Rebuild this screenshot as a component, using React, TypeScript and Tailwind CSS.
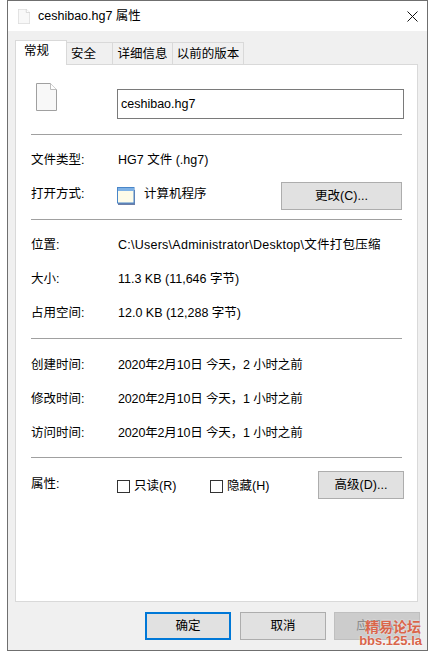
const font = "font-['Liberation_Sans','Noto_Sans_CJK_SC',sans-serif]"

function FileIcon({ small }: { small?: boolean }) {
  return (
    <svg width={small ? 12 : 21} height={small ? 15 : 28} viewBox="0 0 21 28" preserveAspectRatio="none" className="shrink-0">
      <path d="M0.5 0.5H14.5L20.5 6.5V27.5H0.5Z" fill="#f8f8f8" stroke={small ? '#c4c4c4' : '#a0a0a0'} />
      <path d="M14.5 0.5V6.5H20.5" fill="#fff" stroke="#bdbdbd" />
    </svg>
  )
}

function AppIcon() {
  return (
    <svg width="18" height="18" viewBox="0 0 18 18" className="shrink-0">
      <rect x="1" y="3" width="17" height="15" fill="#6d7fa8" />
      <rect x="0.5" y="0.5" width="16.5" height="15.5" fill="#fdfbe9" stroke="#4a86c8" />
      <rect x="1" y="1" width="16" height="3" fill="#7fb2e6" />
    </svg>
  )
}

function Divider() {
  return <div className="h-px bg-[#a0a0a0]" />
}

function Row({ label, value, className, valueClass }: { label: string; value: string; className?: string; valueClass?: string }) {
  return (
    <div className={`flex h-[18px] items-center ${className ?? ''}`}>
      <span className="w-[87px] shrink-0">{label}</span>
      <span className={`whitespace-nowrap ${valueClass ?? ''}`}>{value}</span>
    </div>
  )
}

function WinButton({ label, className }: { label: string; className?: string }) {
  return (
    <div className={`flex items-center justify-center bg-[#e1e1e1] border border-[#adadad] text-black ${className ?? ''}`}>
      {label}
    </div>
  )
}

function Check({ label, className }: { label: string; className?: string }) {
  return (
    <div className={`flex items-center gap-[4px] ${className ?? ''}`}>
      <span className="w-[13px] h-[13px] border border-[#333] bg-white" />
      <span>{label}</span>
    </div>
  )
}

export default function App() {
  return (
    <div className={`w-[435px] h-[658px] bg-white pl-[7px] text-[12.5px] leading-[18px] text-black ${font}`}>
      <div className="w-[421px] h-[651px] border border-[#6f6f6f] flex flex-col bg-[#f0f0f0]">
        {/* title bar */}
        <div className="h-[30px] bg-white flex items-center pl-[10px] pr-[9px] shrink-0">
          <FileIcon small />
          <span className="ml-[8px] -mt-[1px]">ceshibao.hg7 属性</span>
          <svg width="11" height="11" viewBox="0 0 11 11" className="ml-auto">
            <path d="M0.5 0.5L10.5 10.5M10.5 0.5L0.5 10.5" stroke="#111" fill="none" />
          </svg>
        </div>

        {/* tabs */}
        <div className="flex items-end h-[34px] pl-[7px] shrink-0 relative z-10 -mb-px">
          <div className="w-[52px] h-[25px] bg-white border border-[#d9d9d9] border-b-0 pl-[8px] pt-[1px]">常规</div>
          <div className="w-[46px] h-[23px] bg-[#f0f0f0] border border-l-0 border-[#d9d9d9] pl-[4px] pt-[2px]">安全</div>
          <div className="w-[60px] h-[23px] bg-[#f0f0f0] border border-l-0 border-[#d9d9d9] text-center pt-[2px]">详细信息</div>
          <div className="w-[71px] h-[23px] bg-[#f0f0f0] border border-l-0 border-[#d9d9d9] text-center pt-[2px]">以前的版本</div>
        </div>

        {/* panel */}
        <div className="ml-[7px] w-[403px] h-[538px] bg-white border border-[#d9d9d9] px-[15px] shrink-0">
          <div className="flex items-start h-[68px] pl-[5px]">
            <div className="mt-[18px]"><FileIcon /></div>
            <div className="ml-[60px] mt-[24px] shrink-0 w-[287px] h-[30px] border border-[#7a7a7a] flex items-center pl-[3px]">ceshibao.hg7</div>
          </div>
          <div className="pt-[1px]"><Divider /></div>

          <Row label="文件类型:" value="HG7 文件 (.hg7)" className="mt-[16px]" />
          <div className="flex items-center h-[28px] mt-[13px]">
            <span className="w-[86px] shrink-0 -mt-[4px]">打开方式:</span>
            <AppIcon />
            <span className="ml-[9px] -mt-[4px]">计算机程序</span>
            <WinButton label="更改(C)..." className="ml-auto w-[121px] h-[28px]" />
          </div>
          <div className="mt-[9px]"><Divider /></div>

          <Row label="位置:" value="C:\Users\Administrator\Desktop\文件打包压缩" className="mt-[16px]" valueClass="tracking-[0.25px]" />
          <Row label="大小:" value="11.3 KB (11,646 字节)" className="mt-[16px]" />
          <Row label="占用空间:" value="12.0 KB (12,288 字节)" className="mt-[16px]" />
          <div className="mt-[16px]"><Divider /></div>

          <Row label="创建时间:" value="2020年2月10日 今天，2 小时之前" className="mt-[17px]" valueClass="tracking-[-0.15px]" />
          <Row label="修改时间:" value="2020年2月10日 今天，1 小时之前" className="mt-[16px]" valueClass="tracking-[-0.15px]" />
          <Row label="访问时间:" value="2020年2月10日 今天，1 小时之前" className="mt-[16px]" valueClass="tracking-[-0.15px]" />
          <div className="mt-[15px]"><Divider /></div>

          <div className="flex items-start h-[28px] mt-[13px]">
            <span className="w-[86px] shrink-0 mt-[4px]">属性:</span>
            <Check label="只读(R)" className="w-[93px] mt-[6px]" />
            <Check label="隐藏(H)" className="mt-[6px]" />
            <WinButton label="高级(D)..." className="ml-auto -mr-[2px] w-[86px] h-[28px]" />
          </div>
        </div>

        {/* footer */}
        <div className="flex gap-[9px] pl-[137px] mt-[10px] relative">
          <WinButton label="确定" className="w-[86px] h-[28px] !border-2 !border-[#0078d7]" />
          <WinButton label="取消" className="w-[86px] h-[28px]" />
          <div className="w-[86px] h-[28px] -ml-[1px] flex items-center justify-center bg-[#cccccc] border border-[#bfbfbf] text-[#8a8a8a]">应用(A)</div>
          {/* forum watermark */}
          <div className="absolute right-[6px] top-[8px] flex flex-col items-end font-bold leading-[14px] text-[#d9654a] [text-shadow:0_0_2px_#fff]">
            <span className="text-[14px]">精易论坛</span>
            <span className="text-[13px] -mr-[1px]">bbs.125.la</span>
          </div>
        </div>
      </div>
    </div>
  )
}
